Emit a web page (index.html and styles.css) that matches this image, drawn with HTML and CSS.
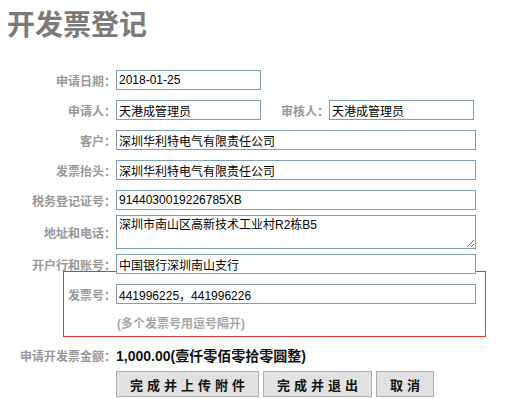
FILE: index.html
```html
<!DOCTYPE html>
<html>
<head>
  <meta charset="utf-8">
  <title>开发票登记</title>
  <link rel="stylesheet" href="styles.css">
</head>
<body>
  <h1 class="title">开发票登记</h1>
  <form id="invoiceForm" class="invoice-form">
    <div class="row">
      <label class="label">申请日期：</label>
      <input type="text" class="field short" value="2018-01-25">
    </div>
    <div class="row">
      <label class="label">申请人：</label>
      <input type="text" class="field short" value="天港成管理员">
      <label class="label label-auditor">审核人：</label>
      <input type="text" class="field short" value="天港成管理员">
    </div>
    <div class="row">
      <label class="label">客户：</label>
      <input type="text" class="field long" value="深圳华利特电气有限责任公司">
    </div>
    <div class="row">
      <label class="label">发票抬头：</label>
      <input type="text" class="field long" value="深圳华利特电气有限责任公司">
    </div>
    <div class="row">
      <label class="label">税务登记证号：</label>
      <input type="text" class="field long" value="9144030019226785XB">
    </div>
    <div class="row row-area">
      <label class="label">地址和电话：</label>
      <textarea class="field long area">深圳市南山区高新技术工业村R2栋B5</textarea>
    </div>
    <div class="row">
      <label class="label">开户行和账号：</label>
      <input type="text" class="field long" value="中国银行深圳南山支行">
    </div>

    <div class="invoice-box">
      <div class="box-row">
        <label class="label label-box">发票号：</label>
        <input type="text" class="field long" value="441996225，441996226">
      </div>
      <div class="hint">(多个发票号用逗号隔开)</div>
    </div>

    <div class="amount-row">
      <span class="label">申请开发票金额：</span>
      <span class="amount">1,000.00(壹仟零佰零拾零圆整)</span>
    </div>

    <div class="actions">
      <button type="button" class="btn">完成并上传附件</button>
      <button type="button" class="btn">完成并退出</button>
      <button type="button" class="btn">取消</button>
    </div>
  </form>
</body>
</html>
```

FILE: styles.css
```css
body {
  margin: 8px;
  font-family: "Liberation Sans", "Noto Sans CJK SC", sans-serif;
  background: #fff;
}
.title {
  margin: 0 0 21px -1px;
  font-size: 28px;
  line-height: 36px;
  font-weight: bold;
  color: #7a7a7a;
}
.row {
  display: flex;
  align-items: center;
  height: 30px;
}
.row-area {
  height: 34px;
}
.label {
  width: 108px;
  flex: none;
  text-align: right;
  font-size: 12px;
  font-weight: bold;
  color: #999;
  white-space: nowrap;
}
.label-auditor {
  width: 68px;
}
.label-box {
  width: 52px;
}
.field {
  box-sizing: border-box;
  height: 20px;
  margin: 0;
  padding: 0 2px;
  border: 1px solid #7f9db9;
  font-family: "Liberation Sans", "Noto Sans CJK SC", sans-serif;
  font-size: 12px;
  color: #000;
  background: #fff;
  outline: none;
}
.short {
  width: 145px;
}
.long {
  width: 360px;
}
.area {
  height: 34px;
  padding: 1px 2px;
  resize: vertical;
  line-height: 16px;
}
.invoice-box {
  width: 421px;
  margin: -8px 0 0 55px;
  padding: 12px 0 3px;
  border: 1px solid #e53333;
}
.box-row {
  display: flex;
  align-items: center;
}
.hint {
  margin: 12px 0 0 53px;
  font-size: 12px;
  line-height: 17px;
  font-weight: bold;
  color: #a6a6a6;
}
.amount-row {
  display: flex;
  align-items: center;
  height: 24px;
  margin-top: 6px;
}
.amount {
  font-size: 14px;
  font-weight: bold;
  color: #111;
}
.actions {
  display: flex;
  gap: 4px;
  margin: 4px 0 0 108px;
}
.btn {
  height: 26px;
  padding: 0 9px 0 13px;
  border: 1px solid #adadad;
  background: #e1e1e1;
  font-family: "Liberation Sans", "Noto Sans CJK SC", sans-serif;
  font-size: 13px;
  font-weight: bold;
  letter-spacing: 4px;
  color: #111;
  cursor: pointer;
}
.btn:hover {
  background: #e5f1fb;
  border-color: #0078d7;
}
```
